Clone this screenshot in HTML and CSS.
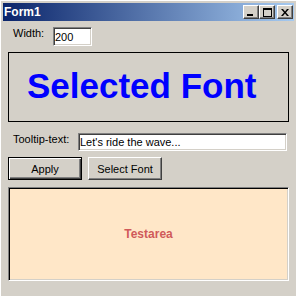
FILE: index.html
```html
<!DOCTYPE html>
<html lang="en">
<head>
    <meta charset="UTF-8">
    <title>Form1</title>
    <link rel="stylesheet" href="styles.css">
</head>
<body>
    <div class="window">
        <div class="titlebar">
            <span class="title">Form1</span>
            <div class="caption-buttons">
                <button class="cap-btn" type="button">
                    <svg width="8" height="7" viewBox="0 0 8 7"><rect x="0" y="5" width="6" height="2" fill="#000"/></svg>
                </button>
                <button class="cap-btn" type="button">
                    <svg width="9" height="9" viewBox="0 0 9 9"><rect x="0.5" y="0.5" width="8" height="8" fill="none" stroke="#000"/><rect x="0" y="0" width="9" height="2" fill="#000"/></svg>
                </button>
                <button class="cap-btn close" type="button">
                    <svg width="8" height="7" viewBox="0 0 8 7"><path d="M0 0h2l2 2.5 2-2.5h2l-3 3.5 3 3.5h-2l-2-2.5-2 2.5h-2l3-3.5z" fill="#000"/></svg>
                </button>
            </div>
        </div>
        <div class="client">
            <div class="row width-row">
                <label for="width">Width:</label>
                <input class="field width-field" id="width" type="text" value="200">
            </div>
            <div class="font-box">
                <span class="font-sample">Selected Font</span>
            </div>
            <div class="row tip-row">
                <label for="tip">Tooltip-text:</label>
                <input class="field tip-field" id="tip" type="text" value="Let's ride the wave...">
            </div>
            <div class="buttons">
                <button class="btn default" type="button">Apply</button>
                <button class="btn" type="button">Select Font</button>
            </div>
            <div class="testarea">Testarea</div>
        </div>
    </div>
</body>
</html>
```

FILE: styles.css
```css
html, body {
    margin: 0;
    padding: 0;
    background: #d4d0c8;
}
body {
    font-family: "Liberation Sans", Arial, sans-serif;
    font-size: 11px;
}
.window {
    box-sizing: border-box;
    width: 296px;
    height: 296px;
    padding: 2px;
    background: #d4d0c8;
    border-top: 1px solid #ffffff;
    border-left: 1px solid #ffffff;
}
.titlebar {
    display: flex;
    align-items: center;
    justify-content: space-between;
    height: 18px;
    padding: 0 1px 0 1px;
    background: linear-gradient(to right, #0a246a, #a6caf0);
}
.title {
    color: #ffffff;
    font-weight: bold;
    font-size: 12px;
}
.caption-buttons {
    display: flex;
}
.cap-btn {
    box-sizing: border-box;
    width: 16px;
    height: 14px;
    padding: 0;
    display: flex;
    align-items: center;
    justify-content: center;
    background: #d4d0c8;
    border: 1px solid;
    border-color: #ffffff #404040 #404040 #ffffff;
    box-shadow: inset -1px -1px #808080;
}
.cap-btn.close {
    margin-left: 2px;
}
.client {
    padding: 6px 5px 0 5px;
}
.row {
    display: flex;
    align-items: flex-start;
    padding-left: 5px;
}
.row label {
    line-height: 13px;
}
.width-row label {
    width: 40px;
}
.tip-row {
    margin-top: 11px;
}
.tip-row label {
    width: 65px;
}
.field {
    box-sizing: border-box;
    margin: 0;
    padding: 0 1px;
    font-family: "Liberation Sans", Arial, sans-serif;
    font-size: 11px;
    color: #000;
    background: #ffffff;
    border: 1px solid;
    border-color: #808080 #ffffff #ffffff #808080;
    box-shadow: inset 1px 1px #404040, inset -1px -1px #d4d0c8;
    outline: none;
}
.width-field {
    width: 39px;
    height: 19px;
}
.tip-field {
    width: 209px;
    height: 18px;
    font-size: 11px;
}
.font-box {
    box-sizing: border-box;
    display: flex;
    align-items: center;
    height: 70px;
    margin-top: 6px;
    padding: 0 0 4px 18px;
    border: 1px solid #000;
}
.font-sample {
    color: #0000ff;
    font-weight: bold;
    font-size: 35px;
    line-height: 35px;
}
.buttons {
    display: flex;
    gap: 6px;
    margin-top: 6px;
}
.btn {
    box-sizing: border-box;
    width: 74px;
    height: 23px;
    padding: 0;
    font-family: "Liberation Sans", Arial, sans-serif;
    font-size: 11px;
    color: #000;
    background: #d4d0c8;
    border: 1px solid;
    border-color: #ffffff #404040 #404040 #ffffff;
    box-shadow: inset -1px -1px #808080;
}
.btn.default {
    border: 1px solid #000;
    box-shadow: inset 1px 1px #ffffff, inset -1px -1px #404040, inset -2px -2px #808080;
}
.testarea {
    box-sizing: border-box;
    display: flex;
    align-items: center;
    justify-content: center;
    height: 94px;
    margin-top: 7px;
    background: #ffe7c8;
    color: #d05a5a;
    font-weight: bold;
    font-size: 12px;
    border: 1px solid;
    border-color: #808080 #ffffff #ffffff #808080;
    box-shadow: inset 1px 1px #000, inset -1px -1px #d4d0c8;
}
```
